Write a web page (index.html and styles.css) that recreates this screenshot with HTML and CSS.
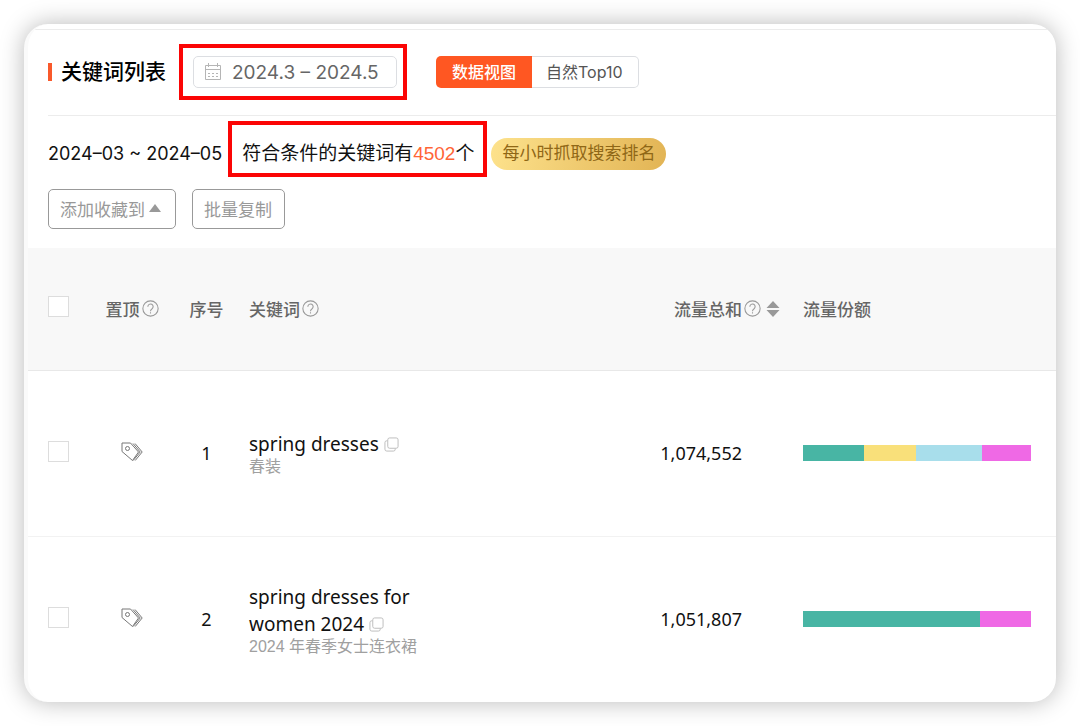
FILE: index.html
```html
<!DOCTYPE html>
<html lang="zh-CN">
<head>
<meta charset="utf-8">
<meta name="viewport" content="width=device-width, initial-scale=1">
<title>关键词列表</title>
<link rel="stylesheet" href="styles.css">
</head>
<body>
<svg class="sprite" aria-hidden="true">
  <symbol id="i-help" viewBox="0 0 16 16"><circle cx="8" cy="8" r="7.2"/><path d="M5.500 6.300a2.500 2.500 0 1 1 3.800 2.100C8.300 9 8 9.400 8 10.500M8 11.600v1.200"/></symbol>
  <symbol id="i-tag" viewBox="0 0 22 20"><path d="M1 1h8.500l8 9-6 8.500L1 9.500z"/><path d="M12 1.500l7.200 8.500-7 8.500M14 1.500l7.200 8.500-7 8.500"/><circle cx="6.500" cy="6.500" r="2"/></symbol>
  <symbol id="i-copy" viewBox="0 0 16 16"><rect x="4" y="1" width="11" height="11" rx="2"/><path d="M3.500 4H3a2 2 0 0 0-2 2v7a2 2 0 0 0 2 2h7a2 2 0 0 0 2-2v-.5"/></symbol>
</svg>
<main class="card">
  <header class="header">
    <h1 class="title">关键词列表</h1>
    <div class="mark mark-date">
      <button class="date" type="button">
        <svg class="calendar" viewBox="0 0 18 18" aria-hidden="true"><path d="M1.500 2.500h15v14h-15zM1.500 6.500h15M4.500 0v4M13.500 0v4"/><path class="dots" d="M4 10.500h10M4 13.500h10"/></svg>
        <span>2024.3 – 2024.5</span>
      </button>
    </div>
    <div class="toggle">
      <button class="seg seg-on" type="button">数据视图</button>
      <button class="seg" type="button">自然Top10</button>
    </div>
  </header>
  <section class="summary">
    <span class="range">2024–03 ~ 2024–05</span>
    <div class="mark mark-count">符合条件的关键词有<span class="count">4502</span>个</div>
    <span class="badge">每小时抓取搜索排名</span>
  </section>
  <div class="actions">
    <button class="btn" type="button">添加收藏到<svg class="caret" viewBox="0 0 12 8" aria-hidden="true"><path d="M6 0l6 8H0z"/></svg></button>
    <button class="btn" type="button">批量复制</button>
  </div>
  <table class="table">
    <thead>
      <tr>
        <th class="c-check"><input class="check" type="checkbox" aria-label="全选"></th>
        <th class="c-pin"><span class="label">置顶<svg class="help"><use href="#i-help"/></svg></span></th>
        <th class="c-num">序号</th>
        <th class="c-word"><span class="label">关键词<svg class="help"><use href="#i-help"/></svg></span></th>
        <th class="c-flow"><span class="label">流量总和<svg class="help"><use href="#i-help"/></svg><svg class="sort" viewBox="0 0 14 16"><path d="M7 0l6.500 7H.5zM7 16l6.500-7H.5z"/></svg></span></th>
        <th class="c-share">流量份额</th>
      </tr>
    </thead>
    <tbody>
      <tr>
        <td class="c-check"><input class="check" type="checkbox" aria-label="选择 spring dresses"></td>
        <td class="c-pin"><svg class="tag"><use href="#i-tag"/></svg></td>
        <td class="c-num">1</td>
        <td class="c-word"><div class="word">spring dresses <svg class="copy"><use href="#i-copy"/></svg></div><div class="trans">春装</div></td>
        <td class="c-flow">1,074,552</td>
        <td class="c-share"><div class="bar"><i class="teal" style="width:26.800%"></i><i class="yellow" style="width:22.800%"></i><i class="blue" style="width:29%"></i><i class="pink" style="width:21.400%"></i></div></td>
      </tr>
      <tr>
        <td class="c-check"><input class="check" type="checkbox" aria-label="选择 spring dresses for women 2024"></td>
        <td class="c-pin"><svg class="tag"><use href="#i-tag"/></svg></td>
        <td class="c-num">2</td>
        <td class="c-word"><div class="word">spring dresses for women 2024 <svg class="copy"><use href="#i-copy"/></svg></div><div class="trans">2024 年春季女士连衣裙</div></td>
        <td class="c-flow">1,051,807</td>
        <td class="c-share"><div class="bar"><i class="teal" style="width:77.500%"></i><i class="pink" style="width:22.500%"></i></div></td>
      </tr>
    </tbody>
  </table>
</main>
</body>
</html>
```
FILE: styles.css
```css
* { box-sizing: border-box; }
body {
  margin: 0;
  padding: 24px;
  background: #fff;
  color: #111;
  font-family: "Liberation Sans", "Noto Sans CJK SC", sans-serif;
}
button { font: inherit; margin: 0; cursor: pointer; }
svg { fill: none; stroke: currentColor; flex: none; }
.sprite { position: absolute; width: 0; height: 0; }
.card {
  border-left: 4px solid #fafafa;
  border-radius: 24px;
  background: #fff;
  box-shadow: 0 0 24px rgba(0, 0, 0, 0.28);
  overflow: hidden;
}
.card::before {
  content: "";
  display: block;
  height: 5px;
  border-bottom: 1px solid #ececec;
}
.header {
  display: flex;
  align-items: center;
  margin-left: 20px;
  padding: 14px 0 15px;
  border-bottom: 1px solid #ececec;
}
.title {
  display: flex;
  align-items: center;
  gap: 9px;
  margin: 0 13px 0 0;
  font-size: 21px;
  line-height: 30px;
  font-weight: 500;
  color: #000;
}
.title::before { content: ""; width: 4px; height: 18px; background: #f9592b; }
.mark { border: 4px solid #fb0505; }
.mark-date { padding: 8px 6px 8px 10px; }
.date {
  display: flex;
  align-items: center;
  gap: 10px;
  width: 204px;
  height: 32px;
  padding: 0 10px;
  border: 1px solid #dcdee2;
  border-radius: 5px;
  background: #fff;
  color: #666;
  font-family: Inter, sans-serif;
  font-size: 19px;
}
.calendar { width: 18px; height: 18px; color: #b5b5b5; }
.dots { stroke-dasharray: 2 2; }
.toggle { display: flex; margin-left: 29px; }
.seg {
  height: 32px;
  padding: 0 15px 2px 14px;
  border: 1px solid #dcdee2;
  border-left: 0;
  border-radius: 0 5px 5px 0;
  background: #fff;
  color: #555;
  font-family: Inter, "Noto Sans CJK SC", sans-serif;
  font-size: 16px;
}
.seg-on {
  padding: 0 16px 2px;
  border: 0;
  border-radius: 5px 0 0 5px;
  background: #ff5722;
  color: #fff;
  font-weight: 500;
}
.summary {
  display: flex;
  align-items: flex-start;
  padding: 5px 0 0 20px;
  font-size: 19px;
  line-height: 32px;
}
.range { margin: 17px 6px 0 0; font-family: Inter, sans-serif; font-size: 18px; }
.mark-count { padding: 13px 9px 3px 10px; }
.count { color: #ff6536; }
.badge {
  margin: 17px 0 0 4px;
  padding: 0 11px;
  border-radius: 16px;
  background: linear-gradient(100deg, #fde28c, #e2b455);
  color: #8f6716;
  font-size: 17px;
}
.actions { display: flex; gap: 16px; padding: 12px 0 19px 20px; }
.btn {
  display: flex;
  align-items: center;
  gap: 4px;
  height: 40px;
  padding: 0 12px 2px 11px;
  border: 1px solid #999;
  border-radius: 5px;
  background: #fff;
  color: #999;
  font-size: 17px;
}
.caret { width: 12px; height: 8px; margin-right: 2px; fill: #999; stroke: none; }
.table { width: 100%; table-layout: fixed; border-collapse: collapse; }
th, td { padding: 0; text-align: left; vertical-align: middle; }
th {
  height: 122px;
  border-bottom: 1px solid #e8e8e8;
  background: #f8f8f8;
  color: #666;
  font-size: 17px;
  font-weight: 500;
}
td {
  height: 166px;
  border-bottom: 1px solid #f2f2f2;
  font-family: "Noto Sans", "Noto Sans CJK SC", sans-serif;
  font-size: 18px;
}
tbody tr:last-child td { border-bottom: 0; }
.label { display: inline-flex; align-items: center; gap: 2px; }
.help { width: 17px; height: 17px; color: #999; }
.sort { width: 14px; height: 16px; margin-left: 3px; fill: #999; stroke: none; }
.c-check { width: 62px; padding-left: 20px; }
.c-pin { width: 84px; text-align: center; }
.c-num { width: 65px; text-align: center; }
.c-word { padding: 0 200px 0 10px; }
th.c-word { padding-right: 0; }
.c-flow { width: 170px; padding-right: 51px; text-align: right; }
th.c-flow { padding-right: 13px; }
.c-share { width: 263px; padding: 0 25px 0 10px; }
.check {
  display: block;
  appearance: none;
  width: 21px;
  height: 21px;
  margin: 0 0 4px;
  border: 1px solid #ddd;
  background: #fff;
}
.tag { display: block; width: 22px; height: 20px; margin: 0 auto 3px; color: #777; }
.word { line-height: 27px; color: #111; font-size: 19px; }
.copy { width: 15px; height: 15px; vertical-align: -1px; color: #bbb; }
.trans {
  color: #a0a0a0;
  font-family: "Liberation Sans", "Noto Sans CJK SC", sans-serif;
  font-size: 16px;
  line-height: 17px;
}
.bar { display: flex; height: 16px; }
.teal { background: #48b5a4; }
.yellow { background: #f9e07a; }
.blue { background: #a8deeb; }
.pink { background: #ef69e5; }
```
